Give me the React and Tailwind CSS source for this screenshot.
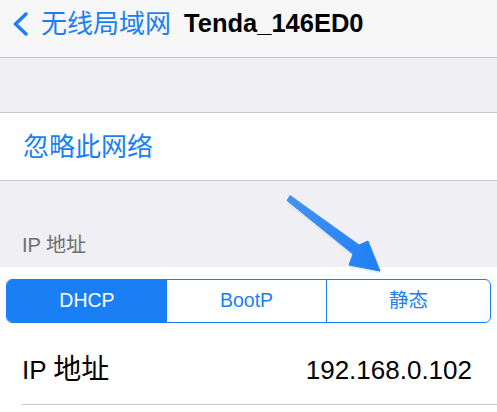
const FONT = "font-['Liberation_Sans','Noto_Sans_CJK_SC',sans-serif]";

const ARROW = 'M290 195.5 L359 245 L368 241 L380 271 L349 265 L353 254 L287 200.5 Z';

function Arrow() {
  return (
    <svg className="pointer-events-none absolute left-0 top-0" width="497" height="412" viewBox="0 0 497 412">
      <defs>
        <linearGradient id="ag" x1="289" y1="198" x2="380" y2="271" gradientUnits="userSpaceOnUse">
          <stop offset="0" stopColor="#4592ee" />
          <stop offset="1" stopColor="#1e7ff7" />
        </linearGradient>
        <filter id="sh" x="-20%" y="-20%" width="140%" height="140%">
          <feGaussianBlur stdDeviation="1.2" />
        </filter>
      </defs>
      <path d={ARROW} fill="#7aa6d6" opacity="0.35" filter="url(#sh)" transform="translate(1 2)" />
      <path d={ARROW} fill="url(#ag)" strokeLinejoin="round" stroke="url(#ag)" strokeWidth="1" />
    </svg>
  );
}

export default function App() {
  return (
    <div className={`relative h-[412px] w-[497px] overflow-hidden bg-[#efeff4] ${FONT}`}>
      {/* nav */}
      <div className="flex h-[58px] items-center border-b border-[#c8c7cc] bg-[#f7f7f8] pb-[10px]">
        <svg className="ml-[12px]" width="17" height="24" viewBox="0 0 17 24">
          <path d="M14 2 L3.5 12 L14 22" fill="none" stroke="#1a7ff5" strokeWidth="3.4" strokeLinecap="round" strokeLinejoin="round" />
        </svg>
        <span className="ml-[12px] text-[26px] leading-none text-[#1a7ff5]">无线局域网</span>
        <span className="ml-[13px] text-[25.5px] font-bold leading-none text-black">Tenda_146ED0</span>
      </div>

      <div className="h-[54px]" />

      <div className="flex h-[69px] items-center border-y border-[#c8c7cc] bg-white pl-[23px]">
        <span className="text-[26px] leading-none text-[#1a7ff5]">忽略此网络</span>
      </div>

      <div className="flex h-[86px] items-end pb-[12px] pl-[22px]">
        <span className="text-[20px] leading-[20px] text-[#6d6d72]">IP 地址</span>
      </div>

      <div className="bg-white pt-[12px]">
        <div className="mx-[6px] flex h-[44px] overflow-hidden rounded-[6px] border-[1.5px] border-[#1a7ff5] text-[19.5px]">
          <div className="flex w-[160px] items-center justify-center bg-[#1a7ff5] text-white">DHCP</div>
          <div className="flex w-[160px] items-center justify-center border-r-[1.5px] border-[#1a7ff5] text-[#1a7ff5]">BootP</div>
          <div className="flex flex-1 items-center justify-center text-[#1a7ff5]">静态</div>
        </div>
        <div className="ml-[22px] mt-[12px] flex h-[70px] items-center justify-between border-b border-[#c8c7cc] pr-[25px]">
          <span className="text-[26px] leading-none text-black">
            IP <span className="text-[28px]">地址</span>
          </span>
          <span className="text-[26px] leading-none text-black">192.168.0.102</span>
        </div>
        <div className="h-[20px]" />
      </div>

      <Arrow />
    </div>
  );
}
